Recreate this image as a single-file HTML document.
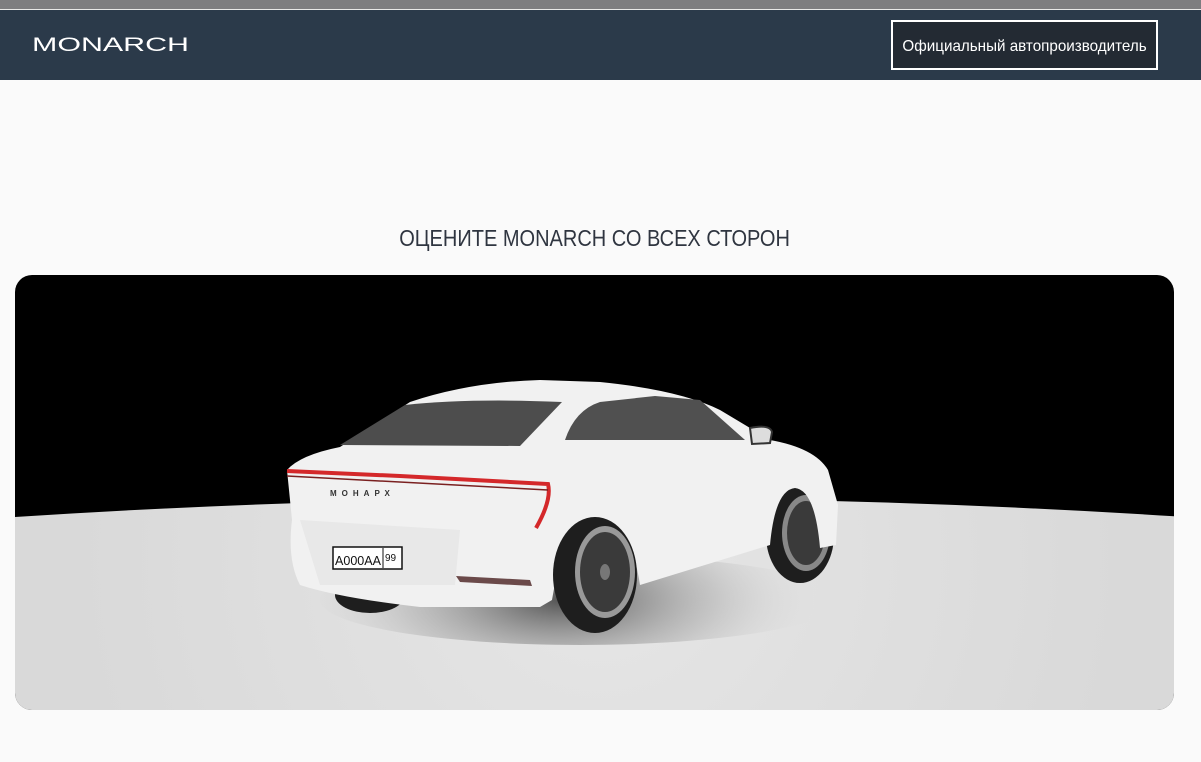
<!DOCTYPE html>
<html><head><meta charset="utf-8"><style>
html,body{margin:0;padding:0;width:1201px;height:762px;overflow:hidden;background:#fafafa;font-family:"Liberation Sans",sans-serif}
.top{position:absolute;left:0;top:0;width:1201px;height:9px;background:#7d7d80;border-bottom:1px solid #e8e8e8}
.hdr{position:absolute;left:0;top:10px;width:1201px;height:70px;background:#2b3a4a}
.btn{position:absolute;left:891px;top:20px;width:263px;height:46px;border:2px solid #fff;background:#232a33;color:#fff;font-size:16px;line-height:50px;text-align:center;white-space:nowrap}
.btn span{display:inline-block;transform:scaleX(0.95)}
.title{position:absolute;left:0;width:1190px;top:225px;text-align:center;color:#2f3540;font-size:23px;white-space:nowrap}
.title span{display:inline-block;transform:scaleX(0.87)}
svg{position:absolute;left:0;top:0}
</style></head><body>
<div class="top"></div>
<div class="hdr"></div>
<div class="btn"><span>Официальный автопроизводитель</span></div>
<div class="title"><span>ОЦЕНИТЕ MONARCH СО ВСЕХ СТОРОН</span></div>
<svg width="1201" height="762" viewBox="0 0 1201 762">
<defs>
<clipPath id="c"><rect x="15" y="275" width="1159" height="435" rx="17"/></clipPath>
<radialGradient id="g" cx="600" cy="560" r="520" gradientUnits="userSpaceOnUse"><stop offset="0" stop-color="#e6e6e6"/><stop offset="1" stop-color="#d9d9d9"/></radialGradient>
<radialGradient id="sh" cx="560" cy="600" r="260" gradientUnits="userSpaceOnUse" gradientTransform="translate(0,360) scale(1,0.4)"><stop offset="0" stop-color="#555"/><stop offset="0.6" stop-color="#aaa" stop-opacity=".5"/><stop offset="1" stop-color="#ddd" stop-opacity="0"/></radialGradient>
</defs>
<text x="32" y="51" font-size="19.5" textLength="157" lengthAdjust="spacingAndGlyphs" fill="#fff" font-family="Liberation Sans,sans-serif">MONARCH</text>
<g clip-path="url(#c)">
<rect x="15" y="275" width="1159" height="435" fill="#000"/>
<path d="M0 518 Q600 478 1201 518 L1201 762 L0 762Z" fill="url(#g)"/>
<ellipse cx="580" cy="600" rx="260" ry="45" fill="url(#sh)"/>
<ellipse cx="370" cy="595" rx="35" ry="18" fill="#1e1e1e"/>
<ellipse cx="800" cy="535" rx="34" ry="48" fill="#1e1e1e"/>
<ellipse cx="806" cy="533" rx="24" ry="38" fill="#888"/><ellipse cx="806" cy="533" rx="19" ry="32" fill="#3a3a3a"/>
<path d="M287 470 Q300 455 340 447 L410 402 Q470 382 540 380 L600 382 Q680 390 720 410 L770 440 Q815 448 828 470 L838 505 L836 545 L820 548 Q815 490 795 488 Q775 490 770 545 L640 585 Q630 520 600 518 Q565 520 552 600 L540 607 L420 607 Q340 598 300 585 Q287 560 292 520 Z" fill="#f1f1f1"/>
<path d="M300 520 L460 530 L455 585 L320 585 Z" fill="#e8e8e8"/>
<path d="M340 445 L405 405 Q470 398 562 402 L520 446 Z" fill="#4d4d4d"/>
<path d="M565 440 Q575 410 600 402 L655 396 L700 400 L745 440 Z" fill="#505050"/>
<path d="M750 428 Q770 424 772 432 L770 443 L752 444Z" fill="#ddd" stroke="#333" stroke-width="2"/>
<path d="M287 471 L400 476 L548 484 Q552 500 536 528" fill="none" stroke="#d4282a" stroke-width="4"/>
<path d="M287 476 L548 490" fill="none" stroke="#7a2020" stroke-width="1.5"/>
<text x="330" y="496" font-size="8" letter-spacing="5" fill="#333" font-weight="bold">МОНАРХ</text>
<ellipse cx="595" cy="575" rx="42" ry="58" fill="#1e1e1e"/>
<ellipse cx="605" cy="572" rx="30" ry="46" fill="#999"/>
<ellipse cx="605" cy="572" rx="25" ry="40" fill="#3a3a3a"/>
<ellipse cx="605" cy="572" rx="5" ry="8" fill="#777"/>
<path d="M456 576 L530 580 L532 586 L460 582Z" fill="#6b4a4a"/>
<rect x="333" y="547" width="69" height="22" fill="#fff" stroke="#111" stroke-width="1.5"/>
<line x1="383" y1="548" x2="383" y2="568" stroke="#111"/>
<text x="335" y="565" font-size="13" textLength="46" lengthAdjust="spacingAndGlyphs" fill="#111">A000AA</text>
<text x="385" y="561" font-size="10" fill="#111">99</text>
</g>
</svg>
</body></html>
